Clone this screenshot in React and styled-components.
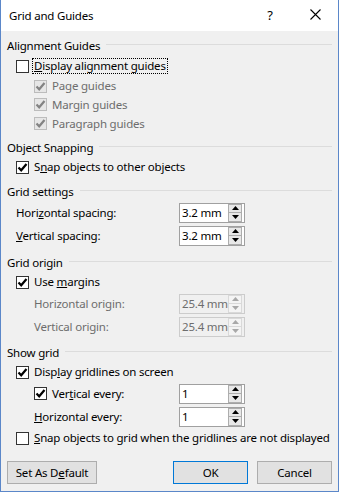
import React from 'react';
import styled, { createGlobalStyle } from 'styled-components';

const Global = createGlobalStyle`
  html, body { margin: 0; padding: 0; background: #f0f0f0; }
  body {
    font-family: "Noto Sans", "Segoe UI", "Liberation Sans", sans-serif;
    font-size: 11.5px;
    letter-spacing: -0.2px;
    color: #000;
  }
  * { box-sizing: border-box; }
`;

const Window = styled.div`
  width: 339px;
  height: 492px;
  border: 1px solid #5b87c9;
  border-top: none;
  background: #f0f0f0;
  display: flex;
  flex-direction: column;
`;

const TitleBar = styled.div`
  height: 31px;
  flex: none;
  background: #fff;
  display: flex;
  align-items: center;
  padding-left: 8px;
`;

const Title = styled.div`
  flex: 1;
  line-height: 16px;
`;

const HelpBtn = styled.div`
  width: 14px;
  font-size: 13px;
  text-align: center;
  margin-right: 32px;
  margin-bottom: 2px;
`;

const CloseBtn = styled.div`
  width: 12px;
  height: 12px;
  margin-right: 17px;
  display: flex;
  align-items: center;
  justify-content: center;
  margin-bottom: 2px;
`;

const Content = styled.div`
  flex: 1;
  display: flex;
  flex-direction: column;
  padding: 4px 6px 0 6px;
`;

const Heading = styled.div`
  height: 20px;
  margin-top: ${p => p.$mt || 0}px;
  display: flex;
  align-items: center;
  gap: 6px;
  white-space: nowrap;
  &::after {
    content: "";
    flex: 1;
    height: 1px;
    background: #dcdcdc;
    margin-top: -1px;
  }
`;

const Row = styled.div`
  height: ${p => p.$h}px;
  display: flex;
  align-items: center;
  padding-left: ${p => p.$indent || 0}px;
  color: ${p => (p.$disabled ? '#6d6d6d' : '#000')};
`;

const Box = styled.span`
  width: 13px;
  height: 13px;
  flex: none;
  border: 1px solid ${p => (p.$disabled ? '#bcbcbc' : '#333')};
  background: ${p => (p.$disabled ? '#e6e6e6' : '#fff')};
  display: flex;
  align-items: center;
  justify-content: center;
  margin-right: 4px;
`;

const Label = styled.span`
  white-space: nowrap;
  line-height: 14px;
  padding: 0 1px;
  outline: ${p => (p.$focus ? '1px dotted #000' : 'none')};
  outline-offset: 0;
`;

const FieldLabel = styled.span`
  width: ${p => p.$w}px;
  flex: none;
  white-space: nowrap;
`;

const Spin = styled.div`
  width: 66px;
  height: 20px;
  border: 1px solid ${p => (p.$disabled ? '#cccccc' : '#a0a0a0')};
  background: ${p => (p.$disabled ? '#f0f0f0' : '#fff')};
  display: flex;
  align-items: stretch;
`;

const SpinText = styled.div`
  flex: 1;
  padding-left: 2px;
  display: flex;
  align-items: center;
  white-space: nowrap;
  overflow: hidden;
  color: ${p => (p.$disabled ? '#6d6d6d' : '#000')};
`;

const SpinCol = styled.div`
  width: 14px;
  flex: none;
  margin: 0 2px 0 0;
  display: flex;
  flex-direction: column;
`;

const SpinBtn = styled.div`
  flex: 1;
  border: 1px solid ${p => (p.$disabled ? '#d9d9d9' : '#adadad')};
  border-top: ${p => (p.$down ? 'none' : undefined)};
  background: ${p => (p.$disabled ? '#f4f4f4' : '#e8e8e8')};
  display: flex;
  align-items: center;
  justify-content: center;
`;

const Buttons = styled.div`
  display: flex;
  margin-top: 13px;
  height: 23px;
`;

const Button = styled.div`
  width: ${p => p.$w}px;
  height: 23px;
  border: 1px solid ${p => (p.$primary ? '#0078d7' : '#adadad')};
  background: #e1e1e1;
  display: flex;
  align-items: center;
  justify-content: center;
  white-space: nowrap;
  margin-left: ${p => p.$ml || 0}px;
`;

const Spacer = styled.div`
  flex: 1;
`;

const Check = ({ disabled }) => (
  <svg width="11" height="11" viewBox="0 0 11 11">
    <path
      d="M1.5 5.5 L4.2 8.3 L9.5 2"
      fill="none"
      stroke={disabled ? '#838383' : '#000'}
      strokeWidth="2.2"
    />
  </svg>
);

const CheckItem = ({ checked, disabled, focus, children }) => (
  <>
    <Box $disabled={disabled}>{checked && <Check disabled={disabled} />}</Box>
    <Label $focus={focus}>{children}</Label>
  </>
);

const Arrow = ({ down, disabled }) => (
  <svg width="7" height="4" viewBox="0 0 7 4">
    <path
      d={down ? 'M0 0 H7 L3.5 4 Z' : 'M0 4 H7 L3.5 0 Z'}
      fill={disabled ? '#a8a8a8' : '#000'}
    />
  </svg>
);

const Spinner = ({ value, disabled }) => (
  <Spin $disabled={disabled}>
    <SpinText $disabled={disabled}>{value}</SpinText>
    <SpinCol>
      <SpinBtn $disabled={disabled}><Arrow disabled={disabled} /></SpinBtn>
      <SpinBtn $disabled={disabled} $down><Arrow down disabled={disabled} /></SpinBtn>
    </SpinCol>
  </Spin>
);

export default function App() {
  return (
    <>
      <Global />
      <Window>
        <TitleBar>
          <Title>Grid and Guides</Title>
          <HelpBtn>?</HelpBtn>
          <CloseBtn>
            <svg width="11" height="11" viewBox="0 0 11 11">
              <path d="M0.5 0.5 L10.5 10.5 M10.5 0.5 L0.5 10.5" stroke="#000" strokeWidth="1.1" />
            </svg>
          </CloseBtn>
        </TitleBar>
        <Content>
          <Heading>Alignment Guides</Heading>
          <Row $h={22} $indent={9}>
            <CheckItem focus><u>D</u>isplay alignment guides</CheckItem>
          </Row>
          <Row $h={18} $indent={27} $disabled>
            <CheckItem checked disabled>Page guides</CheckItem>
          </Row>
          <Row $h={19} $indent={27} $disabled>
            <CheckItem checked disabled>Margin guides</CheckItem>
          </Row>
          <Row $h={19} $indent={27} $disabled>
            <CheckItem checked disabled>Paragraph guides</CheckItem>
          </Row>

          <Heading $mt={4}>Object Snapping</Heading>
          <Row $h={20} $indent={9}>
            <CheckItem checked>S<u>n</u>ap objects to other objects</CheckItem>
          </Row>

          <Heading $mt={4}>Grid settings</Heading>
          <Row $h={23} $indent={9}>
            <FieldLabel $w={163}>Hori<u>z</u>ontal spacing:</FieldLabel>
            <Spinner value="3.2 mm" />
          </Row>
          <Row $h={23} $indent={9}>
            <FieldLabel $w={163}><u>V</u>ertical spacing:</FieldLabel>
            <Spinner value="3.2 mm" />
          </Row>

          <Heading $mt={5}>Grid origin</Heading>
          <Row $h={20} $indent={9}>
            <CheckItem checked>Use <u>m</u>argins</CheckItem>
          </Row>
          <Row $h={23} $indent={27} $disabled>
            <FieldLabel $w={145}>Horizontal origin:</FieldLabel>
            <Spinner value="25.4 mm" disabled />
          </Row>
          <Row $h={23} $indent={27} $disabled>
            <FieldLabel $w={145}>Vertical origin:</FieldLabel>
            <Spinner value="25.4 mm" disabled />
          </Row>

          <Heading $mt={4}>Show grid</Heading>
          <Row $h={20} $indent={9}>
            <CheckItem checked>Disp<u>l</u>ay gridlines on screen</CheckItem>
          </Row>
          <Row $h={23} $indent={27}>
            <FieldLabel $w={145}>
              <Row $h={20}>
                <CheckItem checked>Ver<u>t</u>ical every:</CheckItem>
              </Row>
            </FieldLabel>
            <Spinner value="1" />
          </Row>
          <Row $h={23} $indent={27}>
            <FieldLabel $w={145}><u>H</u>orizontal every:</FieldLabel>
            <Spinner value="1" />
          </Row>
          <Row $h={20} $indent={9}>
            <CheckItem><u>S</u>nap objects to grid when the gridlines are not displayed</CheckItem>
          </Row>

          <Buttons>
            <Button $w={90}>Set As D<u>e</u>fault</Button>
            <Spacer />
            <Button $w={75} $primary>OK</Button>
            <Button $w={75} $ml={9}>Cancel</Button>
          </Buttons>
        </Content>
      </Window>
    </>
  );
}
